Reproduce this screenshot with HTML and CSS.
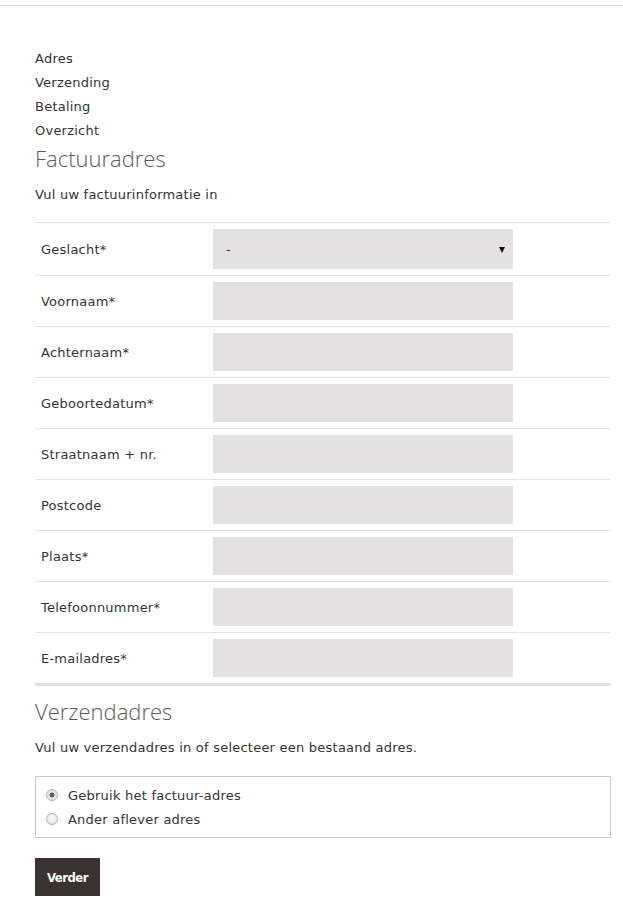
FILE: index.html
```html
<!DOCTYPE html>
<html lang="nl">
<head>
<meta charset="utf-8">
<title>Factuuradres</title>
<link rel="stylesheet" href="styles.css">
</head>
<body>
<div class="topbar"></div>
<main class="page">
  <ul class="steps">
    <li>Adres</li>
    <li>Verzending</li>
    <li>Betaling</li>
    <li>Overzicht</li>
  </ul>
  <h2 class="title">Factuuradres</h2>
  <p class="intro">Vul uw factuurinformatie in</p>
  <div class="form">
    <div class="row">
      <label class="label">Geslacht*</label>
      <div class="select-wrap">
        <select class="field select"><option>-</option></select>
      </div>
    </div>
    <div class="row"><label class="label">Voornaam*</label><input class="field" type="text"></div>
    <div class="row"><label class="label">Achternaam*</label><input class="field" type="text"></div>
    <div class="row"><label class="label">Geboortedatum*</label><input class="field" type="text"></div>
    <div class="row"><label class="label">Straatnaam + nr.</label><input class="field" type="text"></div>
    <div class="row"><label class="label">Postcode</label><input class="field" type="text"></div>
    <div class="row"><label class="label">Plaats*</label><input class="field" type="text"></div>
    <div class="row"><label class="label">Telefoonnummer*</label><input class="field" type="text"></div>
    <div class="row"><label class="label">E-mailadres*</label><input class="field" type="text"></div>
  </div>
  <h2 class="title title-second">Verzendadres</h2>
  <p class="intro intro-second">Vul uw verzendadres in of selecteer een bestaand adres.</p>
  <div class="choices">
    <label class="choice"><input type="radio" name="ship" class="radio" checked> Gebruik het factuur-adres</label>
    <label class="choice"><input type="radio" name="ship" class="radio"> Ander aflever adres</label>
  </div>
  <button class="btn" type="button">Verder</button>
</main>
</body>
</html>
```
FILE: styles.css
```css
html, body {
  margin: 0;
  padding: 0;
  background: #fff;
}
body {
  font-family: "DejaVu Sans", Verdana, sans-serif;
  font-size: 13px;
  letter-spacing: 0.23px;
  color: #333;
}
.topbar {
  height: 5px;
  background: #fcfcfc;
  border-bottom: 1px solid #dcdcdc;
}
.page {
  padding: 41px 12px 20px 35px;
}
.steps {
  list-style: none;
  margin: 0;
  padding: 0;
}
.steps li {
  line-height: 24px;
}
.title {
  margin: 0;
  font-family: "Open Sans", sans-serif;
  font-weight: 300;
  font-size: 22px;
  line-height: 30px;
  letter-spacing: 0;
  color: #5a5a5a;
}
.intro {
  margin: 10px 0 15px;
  line-height: 24px;
}
.form {
  border-bottom: 3px solid #e0e0e0;
}
.row {
  display: grid;
  grid-template-columns: 178px 300px;
  align-items: center;
  border-top: 1px solid #e3e3e3;
  padding: 6px 0;
}
.label {
  padding-left: 6px;
}
.field {
  box-sizing: border-box;
  display: block;
  width: 300px;
  height: 38px;
  border: 0;
  margin: 0;
  padding: 0 13px;
  background: #e3e1e2;
  font-family: inherit;
  font-size: 13px;
  color: #333;
  outline: none;
}
.select-wrap {
  position: relative;
  width: 300px;
}
.select {
  height: 40px;
  -webkit-appearance: none;
  appearance: none;
  border-radius: 0;
}
.select-wrap::after {
  content: "";
  position: absolute;
  right: 8px;
  top: 18px;
  border-left: 3px solid transparent;
  border-right: 3px solid transparent;
  border-top: 6px solid #111;
  pointer-events: none;
}
.title-second {
  margin-top: 10px;
}
.intro-second {
  margin: 10px 0 16px;
}
.choices {
  border: 1px solid #ccc;
  padding: 7px 10px 5px;
}
.choice {
  display: flex;
  align-items: center;
  line-height: 24px;
}
.radio {
  -webkit-appearance: none;
  appearance: none;
  box-sizing: border-box;
  width: 12px;
  height: 12px;
  margin: 0 10px 0 0;
  border: 1px solid #b5b5b5;
  border-radius: 50%;
  background: radial-gradient(circle at 50% 40%, #fafafa 0, #e8e8e8 60%, #d6d6d6 100%);
  position: relative;
  top: -1px;
}
.radio:checked {
  background: radial-gradient(circle, #555 0, #666 2.2px, #e6e6e6 2.8px, #dcdcdc 100%);
}
.btn {
  margin-top: 20px;
  width: 65px;
  height: 38px;
  border: 0;
  background: #3a3231;
  color: #fff;
  font-family: "DejaVu Sans Condensed", "DejaVu Sans", sans-serif;
  font-weight: bold;
  font-size: 13px;
  letter-spacing: -0.5px;
  padding: 0;
  cursor: pointer;
}
```
